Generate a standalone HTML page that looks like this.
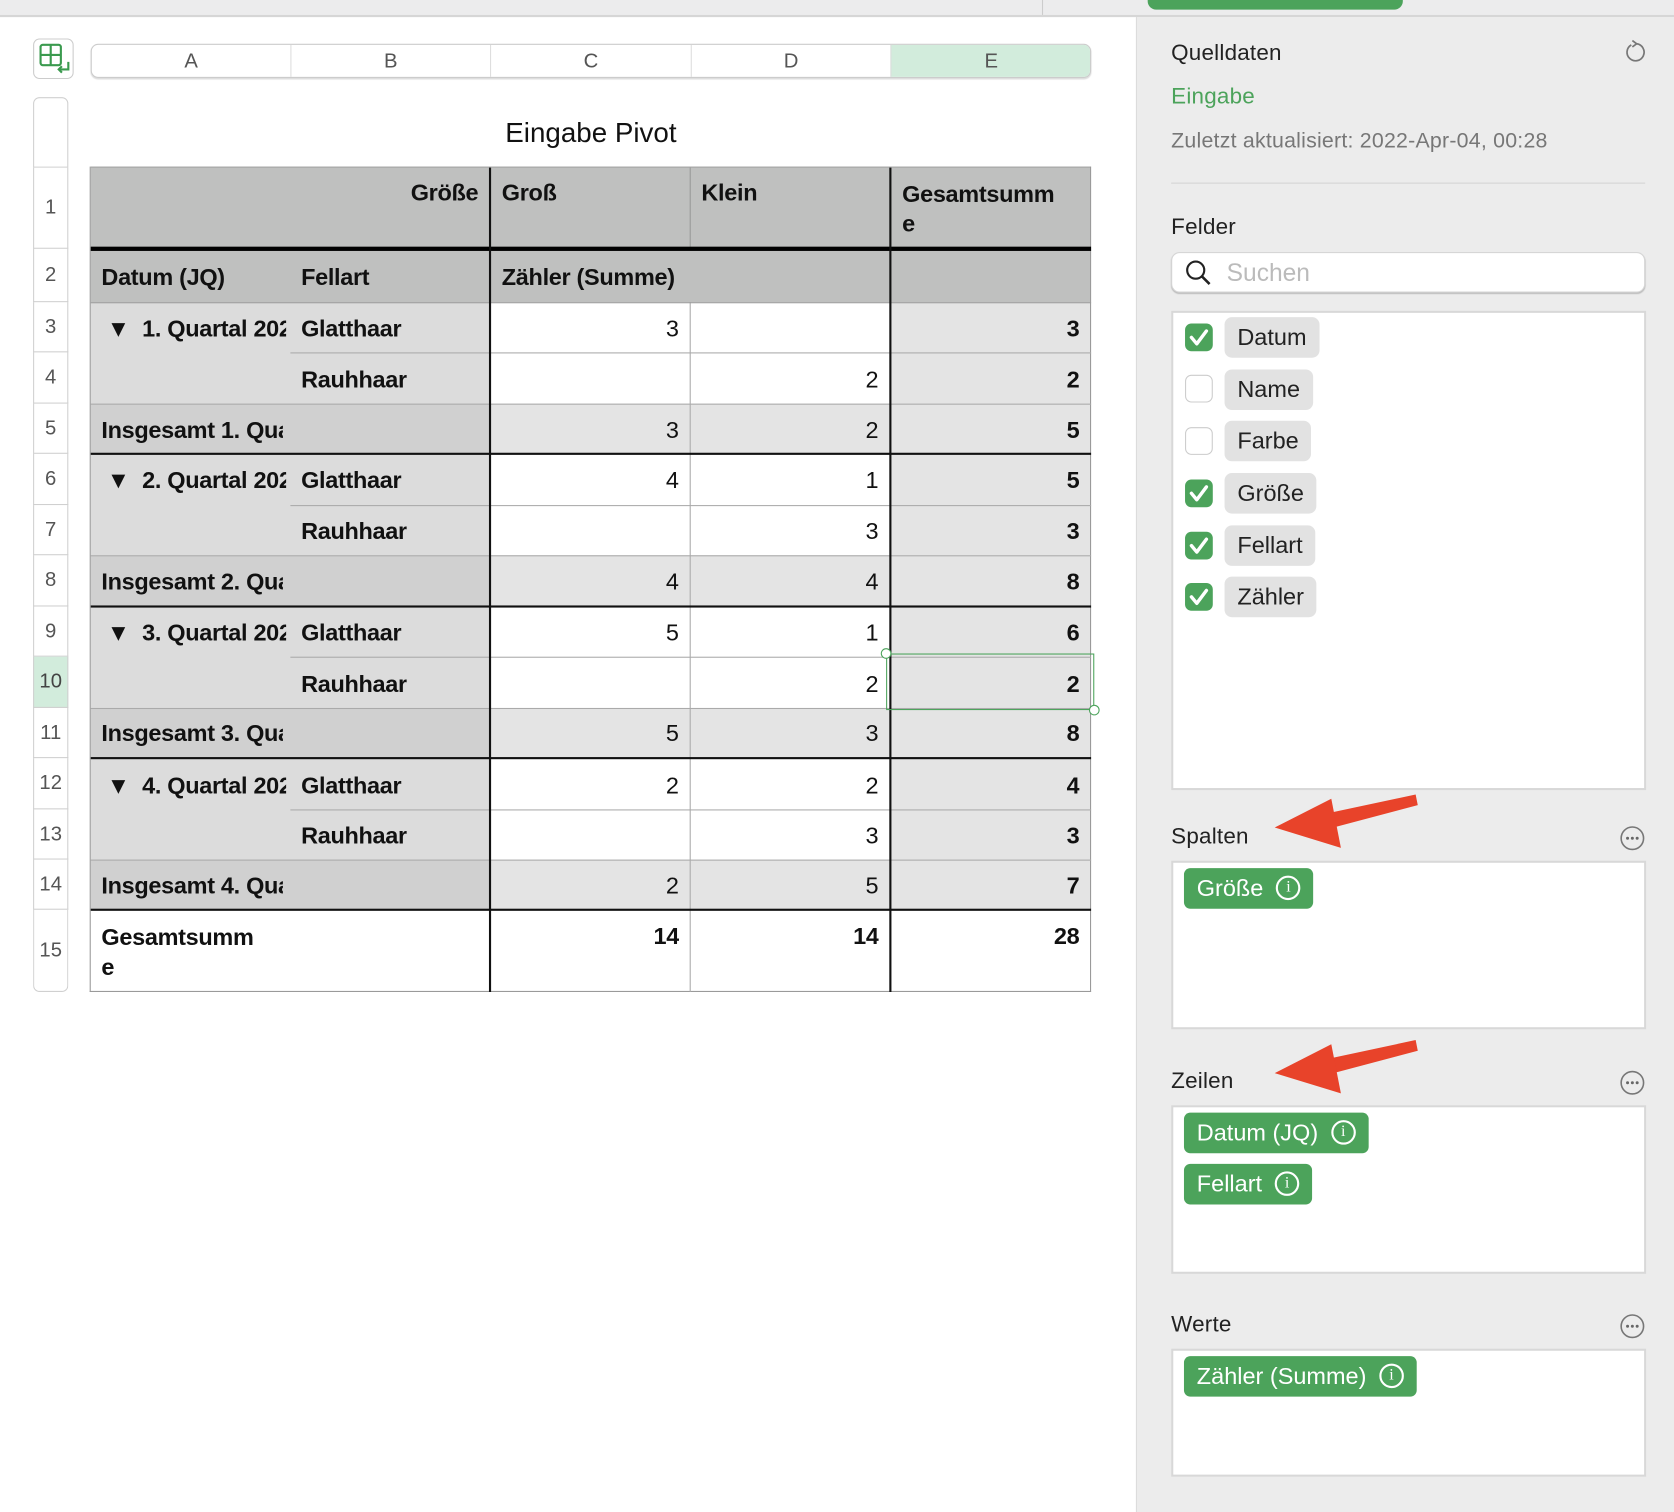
<!DOCTYPE html>
<html><head><meta charset="utf-8"><style>
*{margin:0;padding:0;box-sizing:border-box}
html,body{width:1674px;height:1418px;overflow:hidden;background:#fff;font-family:"Liberation Sans",sans-serif}
#w{position:absolute;left:0;top:0;width:1568px;height:1328px;transform:scale(1.0676,1.0678);transform-origin:0 0}
.a{position:absolute}
.c{position:absolute;font-weight:bold;font-size:22px;color:#111;white-space:nowrap;overflow:hidden;letter-spacing:-0.3px}
.rh{position:absolute;left:31px;width:33px;font-size:19px;color:#555;text-align:center;border-left:1px solid #d0d0d0;border-right:1px solid #d0d0d0;border-bottom:1px solid #d0d0d0}
.sb{font-size:21px;color:#222;letter-spacing:0.2px}
.pill{position:absolute;background:#4ca35b;color:#fff;font-size:22px;border-radius:6px;height:38px;line-height:38px;padding-left:12px}
.pill i{display:inline-block;width:23px;height:23px;border:2px solid #fff;border-radius:50%;font-style:normal;font-size:15px;line-height:19px;text-align:center;vertical-align:middle;margin:-4px 12px 0 12px;font-family:"Liberation Serif",serif}
.fp{position:absolute;left:1147px;background:#e2e2e2;border-radius:7px;height:38px;line-height:38px;padding:0 12px;font-size:22px;color:#222}
.cb{position:absolute;left:1110px;width:26px;height:26px;border-radius:6px}
.on{background:#4ca35b}
.off{background:#fff;border:1px solid #ccc}
.dots{position:absolute;left:1517px}
</style></head><body><div id="w">
<div class="a" style="left:0;top:0;width:1568px;height:16px;background:#ececed;border-bottom:2px solid #d6d6d6"></div>
<div class="a" style="left:976px;top:0;width:1px;height:14px;background:#ccc"></div>
<div class="a" style="left:1075px;top:0;width:239px;height:9px;background:#4ca35b;border-radius:0 0 8px 8px"></div>
<div class="a" style="left:1064px;top:16px;width:504px;height:1400px;background:#ececec;border-left:1px solid #dcdcdc"></div>
<div class="a" style="left:31px;top:36px;width:38px;height:38px;border:1px solid #ccc;border-radius:6px;background:#fff"></div>
<svg class="a" style="left:36px;top:40px" width="32" height="32" viewBox="0 0 32 32"><rect x="2" y="2" width="19" height="19" rx="2" fill="none" stroke="#3a9a4e" stroke-width="2"/><line x1="11.5" y1="2" x2="11.5" y2="21" stroke="#3a9a4e" stroke-width="2"/><line x1="2" y1="11.5" x2="21" y2="11.5" stroke="#3a9a4e" stroke-width="2"/><path d="M28 18v7h-8" fill="none" stroke="#3a9a4e" stroke-width="2"/><path d="M22 22l-3 3 3 3" fill="none" stroke="#3a9a4e" stroke-width="2"/></svg>
<div class="a" style="left:85px;top:41px;width:937px;height:32px;border:1px solid #ccc;border-radius:7px;overflow:hidden;background:#fff;box-shadow:0 1px 1px #ddd">
<div class="a" style="left:748px;top:0;width:188px;height:32px;background:#d2ecdc"></div>
<div class="a" style="left:186px;top:0;width:1px;height:32px;background:#ddd"></div>
<div class="a" style="left:373px;top:0;width:1px;height:32px;background:#ddd"></div>
<div class="a" style="left:561px;top:0;width:1px;height:32px;background:#ddd"></div>
<div class="a" style="left:748px;top:0;width:1px;height:32px;background:#ddd"></div>
<div class="a" style="left:0;top:5px;width:186px;text-align:center;font-size:19px;color:#555">A</div>
<div class="a" style="left:187px;top:5px;width:186px;text-align:center;font-size:19px;color:#555">B</div>
<div class="a" style="left:374px;top:5px;width:187px;text-align:center;font-size:19px;color:#555">C</div>
<div class="a" style="left:562px;top:5px;width:186px;text-align:center;font-size:19px;color:#555">D</div>
<div class="a" style="left:749px;top:5px;width:187px;text-align:center;font-size:19px;color:#555">E</div>
</div>
<div class="rh" style="top:91px;height:66px;border-top:1px solid #d0d0d0;border-radius:6px 6px 0 0"></div>
<div class="rh" style="top:157px;height:76px;line-height:76px">1</div>
<div class="rh" style="top:233px;height:50px;line-height:50px">2</div>
<div class="rh" style="top:283px;height:47px;line-height:47px">3</div>
<div class="rh" style="top:330px;height:48px;line-height:48px">4</div>
<div class="rh" style="top:378px;height:47px;line-height:47px">5</div>
<div class="rh" style="top:425px;height:48px;line-height:48px">6</div>
<div class="rh" style="top:473px;height:47px;line-height:47px">7</div>
<div class="rh" style="top:520px;height:48px;line-height:48px">8</div>
<div class="rh" style="top:568px;height:47px;line-height:47px">9</div>
<div class="rh" style="top:615px;height:48px;line-height:48px;background:#d2ecdc;color:#444">10</div>
<div class="rh" style="top:663px;height:47px;line-height:47px">11</div>
<div class="rh" style="top:710px;height:48px;line-height:48px">12</div>
<div class="rh" style="top:758px;height:47px;line-height:47px">13</div>
<div class="rh" style="top:805px;height:47px;line-height:47px">14</div>
<div class="rh" style="top:852px;height:77px;line-height:77px;border-radius:0 0 6px 6px">15</div>
<div class="a" style="left:85px;top:109px;width:937px;text-align:center;font-size:26px;color:#111">Eingabe Pivot</div>
<div class="a" style="left:85px;top:157px;width:937px;height:126px;background:#bfc0bf"></div>
<div class="a" style="left:85px;top:283px;width:374px;height:95px;background:#dcdcdc"></div>
<div class="a" style="left:85px;top:378px;width:374px;height:47px;background:#d0d0d0"></div>
<div class="a" style="left:459px;top:378px;width:563px;height:47px;background:#e4e4e4"></div>
<div class="a" style="left:834px;top:283px;width:188px;height:95px;background:#e4e4e4"></div>
<div class="a" style="left:85px;top:425px;width:374px;height:95px;background:#dcdcdc"></div>
<div class="a" style="left:85px;top:520px;width:374px;height:48px;background:#d0d0d0"></div>
<div class="a" style="left:459px;top:520px;width:563px;height:48px;background:#e4e4e4"></div>
<div class="a" style="left:834px;top:425px;width:188px;height:95px;background:#e4e4e4"></div>
<div class="a" style="left:85px;top:568px;width:374px;height:95px;background:#dcdcdc"></div>
<div class="a" style="left:85px;top:663px;width:374px;height:47px;background:#d0d0d0"></div>
<div class="a" style="left:459px;top:663px;width:563px;height:47px;background:#e4e4e4"></div>
<div class="a" style="left:834px;top:568px;width:188px;height:95px;background:#e4e4e4"></div>
<div class="a" style="left:85px;top:710px;width:374px;height:95px;background:#dcdcdc"></div>
<div class="a" style="left:85px;top:805px;width:374px;height:47px;background:#d0d0d0"></div>
<div class="a" style="left:459px;top:805px;width:563px;height:47px;background:#e4e4e4"></div>
<div class="a" style="left:834px;top:710px;width:188px;height:95px;background:#e4e4e4"></div>
<div class="a" style="left:85px;top:156px;width:937px;height:1px;background:#999"></div>
<div class="a" style="left:84px;top:156px;width:1px;height:773px;background:#999"></div>
<div class="a" style="left:1021px;top:156px;width:1px;height:773px;background:#999"></div>
<div class="a" style="left:84px;top:928px;width:938px;height:1px;background:#999"></div>
<div class="a" style="left:646px;top:157px;width:1px;height:76px;background:#999"></div>
<div class="a" style="left:646px;top:283px;width:1px;height:646px;background:#aaa"></div>
<div class="a" style="left:85px;top:283px;width:937px;height:1px;background:#999"></div>
<div class="a" style="left:272px;top:330px;width:750px;height:1px;background:#aaa"></div>
<div class="a" style="left:85px;top:378px;width:937px;height:1px;background:#aaa"></div>
<div class="a" style="left:272px;top:473px;width:750px;height:1px;background:#aaa"></div>
<div class="a" style="left:85px;top:520px;width:937px;height:1px;background:#aaa"></div>
<div class="a" style="left:272px;top:615px;width:750px;height:1px;background:#aaa"></div>
<div class="a" style="left:85px;top:663px;width:937px;height:1px;background:#aaa"></div>
<div class="a" style="left:272px;top:758px;width:750px;height:1px;background:#aaa"></div>
<div class="a" style="left:85px;top:805px;width:937px;height:1px;background:#aaa"></div>
<div class="a" style="left:85px;top:231px;width:937px;height:4px;background:#000"></div>
<div class="a" style="left:85px;top:424px;width:937px;height:2px;background:#111"></div>
<div class="a" style="left:85px;top:567px;width:937px;height:2px;background:#111"></div>
<div class="a" style="left:85px;top:709px;width:937px;height:2px;background:#111"></div>
<div class="a" style="left:85px;top:851px;width:937px;height:2px;background:#111"></div>
<div class="a" style="left:458px;top:157px;width:2px;height:772px;background:#111"></div>
<div class="a" style="left:833px;top:157px;width:2px;height:772px;background:#111"></div>
<div class="c" style="left:272px;top:168px;width:176px;text-align:right">Größe</div>
<div class="c" style="left:470px;top:168px">Groß</div>
<div class="c" style="left:657px;top:168px">Klein</div>
<div class="c" style="left:845px;top:168px;line-height:28px">Gesamtsumm<br>e</div>
<div class="c" style="left:95px;top:247px">Datum (JQ)</div>
<div class="c" style="left:282px;top:247px">Fellart</div>
<div class="c" style="left:470px;top:247px">Zähler (Summe)</div>
<div class="c" style="left:100px;top:295px;width:168px">▼ &nbsp;1. Quartal 2022</div>
<div class="c" style="left:282px;top:295px">Glatthaar</div>
<div class="c" style="left:282px;top:343px">Rauhhaar</div>
<div class="c" style="left:95px;top:390px;width:170px">Insgesamt 1. Quartal</div>
<div class="c" style="left:100px;top:437px;width:168px">▼ &nbsp;2. Quartal 2022</div>
<div class="c" style="left:282px;top:437px">Glatthaar</div>
<div class="c" style="left:282px;top:485px">Rauhhaar</div>
<div class="c" style="left:95px;top:532px;width:170px">Insgesamt 2. Quartal</div>
<div class="c" style="left:100px;top:580px;width:168px">▼ &nbsp;3. Quartal 2022</div>
<div class="c" style="left:282px;top:580px">Glatthaar</div>
<div class="c" style="left:282px;top:628px">Rauhhaar</div>
<div class="c" style="left:95px;top:674px;width:170px">Insgesamt 3. Quartal</div>
<div class="c" style="left:100px;top:723px;width:168px">▼ &nbsp;4. Quartal 2022</div>
<div class="c" style="left:282px;top:723px">Glatthaar</div>
<div class="c" style="left:282px;top:770px">Rauhhaar</div>
<div class="c" style="left:95px;top:817px;width:170px">Insgesamt 4. Quartal</div>
<div class="c" style="left:95px;top:864px;line-height:28px">Gesamtsumm<br>e</div>
<div style="font-size:22px;color:#111">
<div class="a" style="left:600px;top:295px;width:36px;text-align:right">3</div>
<div class="a" style="left:600px;top:390px;width:36px;text-align:right">3</div>
<div class="a" style="left:787px;top:343px;width:36px;text-align:right">2</div>
<div class="a" style="left:787px;top:390px;width:36px;text-align:right">2</div>
<div class="a" style="left:600px;top:437px;width:36px;text-align:right">4</div>
<div class="a" style="left:787px;top:437px;width:36px;text-align:right">1</div>
<div class="a" style="left:787px;top:485px;width:36px;text-align:right">3</div>
<div class="a" style="left:600px;top:532px;width:36px;text-align:right">4</div>
<div class="a" style="left:787px;top:532px;width:36px;text-align:right">4</div>
<div class="a" style="left:600px;top:580px;width:36px;text-align:right">5</div>
<div class="a" style="left:787px;top:580px;width:36px;text-align:right">1</div>
<div class="a" style="left:787px;top:628px;width:36px;text-align:right">2</div>
<div class="a" style="left:600px;top:674px;width:36px;text-align:right">5</div>
<div class="a" style="left:787px;top:674px;width:36px;text-align:right">3</div>
<div class="a" style="left:600px;top:723px;width:36px;text-align:right">2</div>
<div class="a" style="left:787px;top:723px;width:36px;text-align:right">2</div>
<div class="a" style="left:787px;top:770px;width:36px;text-align:right">3</div>
<div class="a" style="left:600px;top:817px;width:36px;text-align:right">2</div>
<div class="a" style="left:787px;top:817px;width:36px;text-align:right">5</div>
</div>
<div class="c" style="left:975px;top:295px;width:36px;text-align:right">3</div>
<div class="c" style="left:975px;top:343px;width:36px;text-align:right">2</div>
<div class="c" style="left:975px;top:390px;width:36px;text-align:right">5</div>
<div class="c" style="left:975px;top:437px;width:36px;text-align:right">5</div>
<div class="c" style="left:975px;top:485px;width:36px;text-align:right">3</div>
<div class="c" style="left:975px;top:532px;width:36px;text-align:right">8</div>
<div class="c" style="left:975px;top:580px;width:36px;text-align:right">6</div>
<div class="c" style="left:975px;top:628px;width:36px;text-align:right">2</div>
<div class="c" style="left:975px;top:674px;width:36px;text-align:right">8</div>
<div class="c" style="left:975px;top:723px;width:36px;text-align:right">4</div>
<div class="c" style="left:975px;top:770px;width:36px;text-align:right">3</div>
<div class="c" style="left:975px;top:817px;width:36px;text-align:right">7</div>
<div class="c" style="left:596px;top:864px;width:40px;text-align:right">14</div>
<div class="c" style="left:783px;top:864px;width:40px;text-align:right">14</div>
<div class="c" style="left:971px;top:864px;width:40px;text-align:right">28</div>
<div class="a" style="left:830px;top:612px;width:195px;height:53px;border:1.5px solid #4ca35b"></div>
<div class="a" style="left:825px;top:607px;width:10px;height:10px;border:1.5px solid #4ca35b;border-radius:50%;background:#fff"></div>
<div class="a" style="left:1020px;top:660px;width:10px;height:10px;border:1.5px solid #4ca35b;border-radius:50%;background:#fff"></div>

<div class="a sb" style="left:1097px;top:38px">Quelldaten</div>
<svg class="a" style="left:1520px;top:37px" width="22" height="24" viewBox="0 0 22 24"><path d="M8 5 A8 8 0 1 0 13 4" fill="none" stroke="#777" stroke-width="1.6"/><path d="M9 1l4 3-4 3" fill="none" stroke="#777" stroke-width="1.6"/></svg>
<div class="a sb" style="left:1097px;top:79px;color:#4ca35b">Eingabe</div>
<div class="a sb" style="left:1097px;top:121px;color:#777;font-size:20px">Zuletzt aktualisiert: 2022-Apr-04, 00:28</div>
<div class="a" style="left:1097px;top:171px;width:444px;height:1px;background:#d4d4d4"></div>
<div class="a sb" style="left:1097px;top:201px">Felder</div>
<div class="a" style="left:1097px;top:236px;width:444px;height:38px;background:#fff;border:1px solid #d6d6d6;border-radius:8px;box-shadow:0 1px 1px #bbb"></div>
<svg class="a" style="left:1110px;top:243px" width="26" height="26" viewBox="0 0 26 26"><circle cx="10" cy="10" r="8" fill="none" stroke="#222" stroke-width="2"/><line x1="16" y1="16" x2="23" y2="23" stroke="#222" stroke-width="2.4"/></svg>
<div class="a" style="left:1149px;top:242px;font-size:23px;color:#bbb">Suchen</div>
<div class="a" style="left:1097px;top:291px;width:445px;height:449px;background:#fff;border:2px solid #d8d8d8"></div>
<div class="cb on" style="top:303px"></div><div class="fp" style="top:297px">Datum</div>
<div class="cb off" style="top:351px"></div><div class="fp" style="top:346px">Name</div>
<div class="cb off" style="top:400px"></div><div class="fp" style="top:394px">Farbe</div>
<div class="cb on" style="top:449px"></div><div class="fp" style="top:443px">Größe</div>
<div class="cb on" style="top:498px"></div><div class="fp" style="top:492px">Fellart</div>
<div class="cb on" style="top:546px"></div><div class="fp" style="top:540px">Zähler</div>
<svg class="a" style="left:1110px;top:303px" width="26" height="270" viewBox="0 0 26 270"><g fill="none" stroke="#fff" stroke-width="3.2" stroke-linecap="round" stroke-linejoin="round"><path d="M6 13l5 6 9-12"/><path d="M6 159l5 6 9-12"/><path d="M6 208l5 6 9-12"/><path d="M6 256l5 6 9-12"/></g></svg>

<div class="a sb" style="left:1097px;top:772px">Spalten</div>
<svg class="dots" style="top:773px" width="24" height="24" viewBox="0 0 24 24"><circle cx="12" cy="12" r="10.5" fill="none" stroke="#777" stroke-width="1.5"/><circle cx="7.5" cy="12" r="1.4" fill="#666"/><circle cx="12" cy="12" r="1.4" fill="#666"/><circle cx="16.5" cy="12" r="1.4" fill="#666"/></svg>
<div class="a" style="left:1097px;top:806px;width:445px;height:158px;background:#fff;border:2px solid #d8d8d8"></div>
<div class="pill" style="left:1109px;top:813px">Größe<i>i</i></div>

<div class="a sb" style="left:1097px;top:1001px">Zeilen</div>
<svg class="dots" style="top:1002px" width="24" height="24" viewBox="0 0 24 24"><circle cx="12" cy="12" r="10.5" fill="none" stroke="#777" stroke-width="1.5"/><circle cx="7.5" cy="12" r="1.4" fill="#666"/><circle cx="12" cy="12" r="1.4" fill="#666"/><circle cx="16.5" cy="12" r="1.4" fill="#666"/></svg>
<div class="a" style="left:1097px;top:1035px;width:445px;height:158px;background:#fff;border:2px solid #d8d8d8"></div>
<div class="pill" style="left:1109px;top:1042px">Datum (JQ)<i>i</i></div>
<div class="pill" style="left:1109px;top:1090px">Fellart<i>i</i></div>

<div class="a sb" style="left:1097px;top:1229px">Werte</div>
<svg class="dots" style="top:1230px" width="24" height="24" viewBox="0 0 24 24"><circle cx="12" cy="12" r="10.5" fill="none" stroke="#777" stroke-width="1.5"/><circle cx="7.5" cy="12" r="1.4" fill="#666"/><circle cx="12" cy="12" r="1.4" fill="#666"/><circle cx="16.5" cy="12" r="1.4" fill="#666"/></svg>
<div class="a" style="left:1097px;top:1263px;width:445px;height:120px;background:#fff;border:2px solid #d8d8d8"></div>
<div class="pill" style="left:1109px;top:1270px">Zähler (Summe)<i>i</i></div>

<svg class="a" style="left:1190px;top:740px" width="145" height="320" viewBox="0 0 145 320"><g fill="#e8432a"><polygon points="136,4 138,14 55,36 52,22"/><polygon points="4,35 57,8 66,54"/><polygon points="136,234 138,244 55,266 52,252"/><polygon points="4,265 57,238 66,284"/></g></svg>
</div></body></html>
